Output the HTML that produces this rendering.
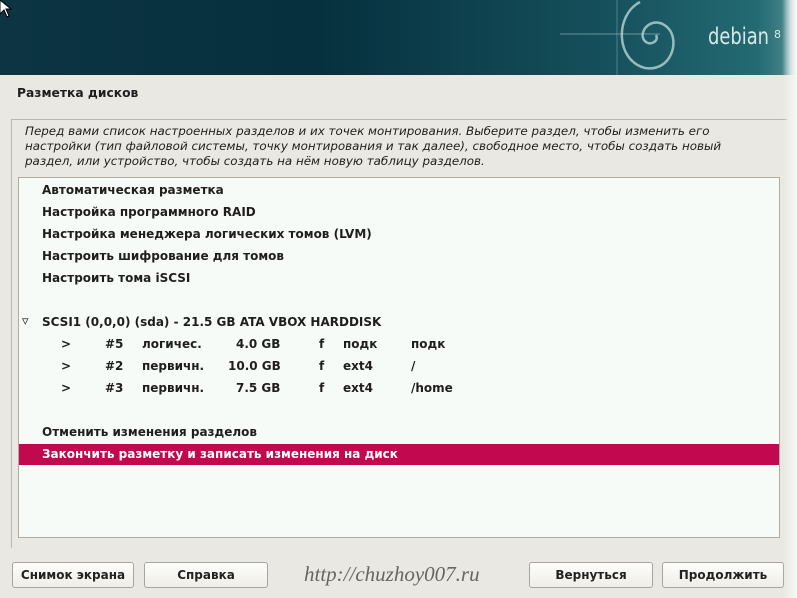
<!DOCTYPE html>
<html><head><meta charset="utf-8"><style>
*{margin:0;padding:0;box-sizing:border-box}
body{width:797px;height:598px;overflow:hidden;background:#e9e8e2;position:relative;font-family:"DejaVu Sans","Liberation Sans",sans-serif;color:#1e1e1e}
.hdr{position:absolute;left:0;top:0;width:797px;height:75px;background:linear-gradient(90deg,#0c3443 0%,#06303e 40%,#154f5b 75%,#236a72 95%,#3e7f84 98%,#dfe9e9 100%)}
.fade{position:absolute;right:0;top:0;width:14px;height:598px;background:linear-gradient(90deg,rgba(255,255,255,0),#f8f8f6)}
.t{position:absolute;font-size:12px;white-space:pre}
.b{font-weight:bold}
.box{position:absolute;left:11px;top:119px;width:776px;height:429px;border:1px solid #b9b8b0;border-right:none;border-bottom:none}
.list{position:absolute;left:18px;top:177px;width:762px;height:361px;background:#f7fbf7;border:1px solid #aeae9f}
.row{position:absolute;left:0;width:760px;height:20px;font-size:12px;font-weight:bold;line-height:20px;white-space:pre;color:#1e1e1e}
.btn{position:absolute;top:562px;height:26px;border:1px solid #a7a69c;border-radius:3px;background:linear-gradient(#fdfdfb,#efeee9);font-size:12px;font-weight:bold;text-align:center;line-height:24px;color:#222}
</style></head><body>
<div class="hdr">
<svg width="797" height="75" style="position:absolute;left:0;top:0">
<line x1="560" y1="34" x2="660" y2="34" stroke="#9fc3c5" stroke-width="1" opacity=".6"/>
<line x1="617" y1="0" x2="617" y2="75" stroke="#9fc3c5" stroke-width="1" opacity=".4"/>
<path d="M640 2 C615 15,615 60,645 68 C672 72,680 40,668 28 C655 15,640 28,643 38 C647 48,660 42,656 35" fill="none" stroke="#b8d3d4" stroke-width="2.5" opacity=".8"/>
<text x="708" y="44" font-family="DejaVu Sans Condensed,DejaVu Sans,sans-serif" font-size="23" fill="#d8e8e8" textLength="61" lengthAdjust="spacingAndGlyphs">debian</text>
<text x="774" y="38" font-family="DejaVu Sans,sans-serif" font-size="11" fill="#d8e8e8">8</text>
</svg>
<svg width="14" height="20" style="position:absolute;left:0;top:0"><path d="M0 0 L0 14 L4 10 L7 17 L9 16 L6 9 L11 9 Z" fill="#fff" stroke="#000" stroke-width="1"/></svg>
</div>
<div class="t b" style="left:17px;top:86px;font-size:12.3px">Разметка дисков</div>
<div class="box"></div>
<div class="t" style="left:25px;top:124px;font-style:italic;line-height:15px;font-size:11.9px">Перед вами список настроенных разделов и их точек монтирования. Выберите раздел, чтобы изменить его
настройки (тип файловой системы, точку монтирования и так далее), свободное место, чтобы создать новый
раздел, или устройство, чтобы создать на нём новую таблицу разделов.</div>
<div class="list">
<div class="row" style="top:2px;padding-left:23px">Автоматическая разметка</div>
<div class="row" style="top:24px;padding-left:23px">Настройка программного RAID</div>
<div class="row" style="top:46px;padding-left:23px">Настройка менеджера логических томов (LVM)</div>
<div class="row" style="top:68px;padding-left:23px">Настроить шифрование для томов</div>
<div class="row" style="top:90px;padding-left:23px">Настроить тома iSCSI</div>
<div class="row" style="top:134px"><span style="position:absolute;left:3px;font-size:13px;font-weight:normal">▿</span><span style="position:absolute;left:23px">SCSI1 (0,0,0) (sda) - 21.5 GB ATA VBOX HARDDISK</span></div>
<div class="row" style="top:156px"><span style="position:absolute;left:42px">&gt;</span><span style="position:absolute;left:86px">#5</span><span style="position:absolute;left:123px">логичес.</span><span style="position:absolute;left:217px">4.0 GB</span><span style="position:absolute;left:300px">f</span><span style="position:absolute;left:324px">подк</span><span style="position:absolute;left:392px">подк</span></div>
<div class="row" style="top:178px"><span style="position:absolute;left:42px">&gt;</span><span style="position:absolute;left:86px">#2</span><span style="position:absolute;left:123px">первичн.</span><span style="position:absolute;left:209px">10.0 GB</span><span style="position:absolute;left:300px">f</span><span style="position:absolute;left:324px">ext4</span><span style="position:absolute;left:392px">/</span></div>
<div class="row" style="top:200px"><span style="position:absolute;left:42px">&gt;</span><span style="position:absolute;left:86px">#3</span><span style="position:absolute;left:123px">первичн.</span><span style="position:absolute;left:217px">7.5 GB</span><span style="position:absolute;left:300px">f</span><span style="position:absolute;left:324px">ext4</span><span style="position:absolute;left:392px">/home</span></div>
<div class="row" style="top:244px;padding-left:23px">Отменить изменения разделов</div>
<div class="row" style="top:266px;height:21px;padding-left:23px;background:#c2084e;color:#fff">Закончить разметку и записать изменения на диск</div>
</div>
<div class="btn" style="left:12px;width:122px">Снимок экрана</div>
<div class="btn" style="left:144px;width:124px">Справка</div>
<div class="t" style="left:304px;top:562px;font-family:'Liberation Serif',serif;font-style:italic;font-size:21px;color:#666">http://chuzhoy007.ru</div>
<div class="btn" style="left:529px;width:124px">Вернуться</div>
<div class="btn" style="left:662px;width:122px">Продолжить</div>
<div class="fade"></div>
</body></html>
